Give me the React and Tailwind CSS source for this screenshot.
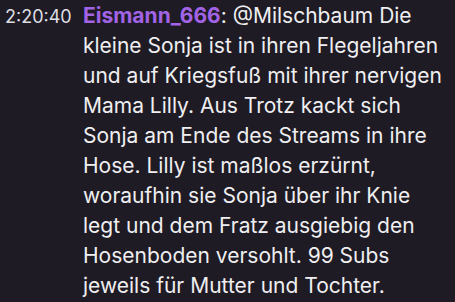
import React from 'react'

const App = () => {
    return (
        <div className="w-[455px] h-[302px] bg-[#1f1b24] overflow-hidden" style={{ fontFamily: 'Inter, "Noto Sans", sans-serif' }}>
            <div className="flex pl-[5px] pr-[12px] pt-[1px]">
                <span className="text-[18px] text-[#dedee3] leading-[30px] pt-[1px] w-[78px] shrink-0">2:20:40</span>
                <p className="text-[21px] leading-[30px] text-[#efeff1]">
                    <span className="font-bold text-[#a263e6]">Eismann_666</span>
                    <span>: @Milschbaum Die kleine Sonja ist in ihren Flegeljahren und auf Kriegsfuß mit ihrer nervigen Mama Lilly. Aus Trotz kackt sich Sonja am Ende des Streams in ihre Hose. Lilly ist maßlos erzürnt, woraufhin sie Sonja über ihr Knie legt und dem Fratz ausgiebig den Hosenboden versohlt. 99 Subs jeweils für Mutter und Tochter.</span>
                </p>
            </div>
        </div>
    )
}

export default App
